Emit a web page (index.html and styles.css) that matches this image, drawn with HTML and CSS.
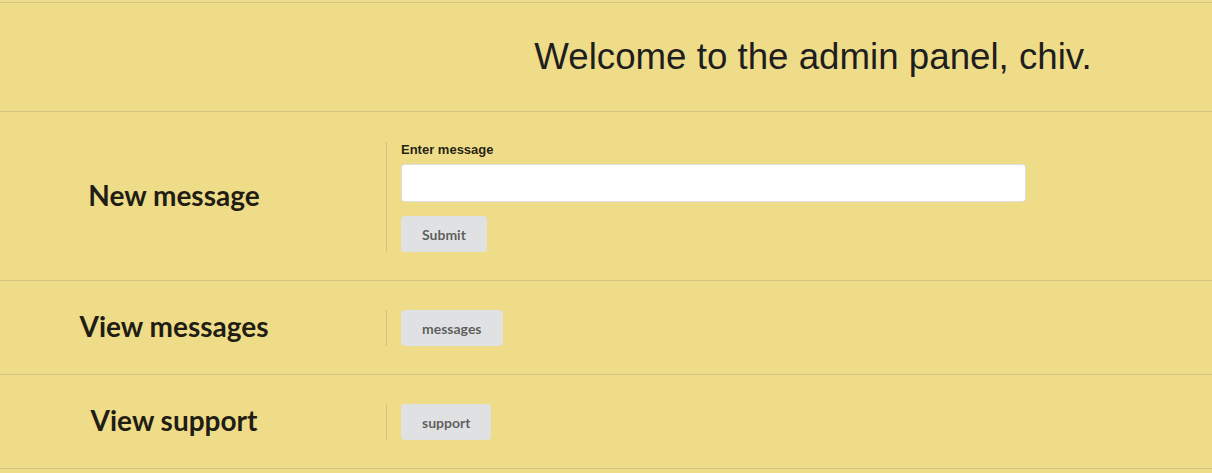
FILE: index.html
```html
<!DOCTYPE html>
<html lang="en">
<head>
<meta charset="utf-8">
<title>Admin panel</title>
<link rel="stylesheet" href="styles.css">
</head>
<body>
<div class="page">
  <header class="header">
    <h1 class="title">Welcome to the admin panel, chiv.</h1>
  </header>
  <section class="row row--first">
    <div class="row-label">New message</div>
    <div class="row-body">
      <form class="form">
        <label class="field-label" for="msg">Enter message</label>
        <input class="field-input" id="msg" type="text">
        <button class="btn" type="button">Submit</button>
      </form>
    </div>
  </section>
  <section class="row">
    <div class="row-label">View messages</div>
    <div class="row-body">
      <button class="btn" type="button">messages</button>
    </div>
  </section>
  <section class="row">
    <div class="row-label">View support</div>
    <div class="row-body">
      <button class="btn" type="button">support</button>
    </div>
  </section>
</div>
</body>
</html>
```

FILE: styles.css
```css
html, body {
  margin: 0;
  padding: 0;
  background: #efdc89;
}

.page {
  padding-top: 2px;
  font-family: "Lato", "Liberation Sans", sans-serif;
  color: rgba(0, 0, 0, 0.87);
}

.header {
  border-top: 1px solid #d3c27f;
  border-bottom: 1px solid #d3c27f;
  height: 108px;
  display: flex;
  align-items: center;
  justify-content: center;
  padding-left: 414px;
}

.title {
  margin: 0;
  font-family: "Liberation Sans", Arial, sans-serif;
  font-weight: 400;
  font-size: 36.7px;
  color: #1e1e1e;
  line-height: 1;
}

.row {
  display: grid;
  grid-template-columns: 348px 1fr;
  align-items: center;
  padding: 29px 0 28px;
  border-bottom: 1px solid #d3c27f;
}

.row--first {
  padding-top: 30px;
}

.row-label {
  text-align: center;
  font-family: "Lato", sans-serif;
  font-weight: 700;
  font-size: 28px;
  color: #1f1d14;
  line-height: 1.2;
  padding-bottom: 2px;
}

.row-body {
  margin-left: 38px;
  border-left: 1px solid #d3c27f;
  padding-left: 14px;
}

.form {
  display: flex;
  flex-direction: column;
  align-items: flex-start;
  margin: 0;
}

.field-label {
  font-family: "Liberation Sans", Arial, sans-serif;
  font-weight: 700;
  font-size: 13px;
  line-height: 16px;
  margin-bottom: 6px;
  color: rgba(0, 0, 0, 0.87);
}

.field-input {
  box-sizing: border-box;
  width: 625px;
  height: 38px;
  margin: 0 0 14px;
  padding: 9px 14px;
  border: 1px solid rgba(34, 36, 38, 0.15);
  border-radius: 4px;
  background: #fff;
  font-family: "Lato", sans-serif;
  font-size: 14px;
  outline: none;
}

.btn {
  display: block;
  box-sizing: border-box;
  height: 36px;
  padding: 2px 21px 0;
  border: none;
  border-radius: 4px;
  background: #e0e1e2;
  color: rgba(0, 0, 0, 0.6);
  font-family: "Lato", sans-serif;
  font-weight: 700;
  font-size: 14px;
  line-height: 34px;
  cursor: pointer;
}
```
